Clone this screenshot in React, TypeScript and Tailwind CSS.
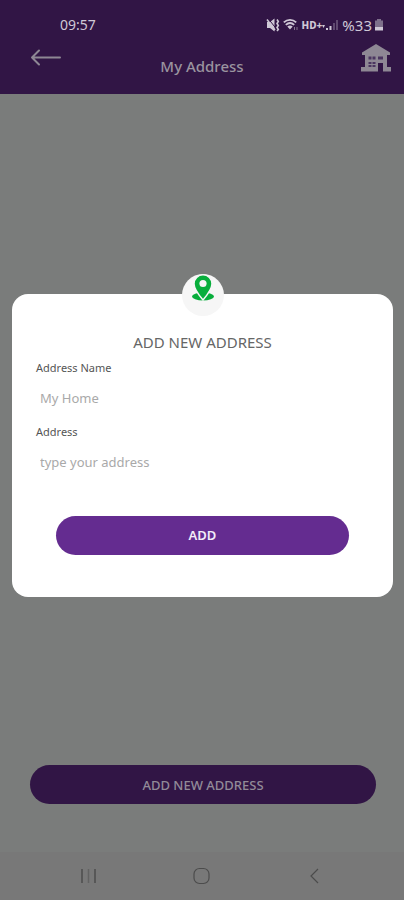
const StatusIcons = () => (
  <div className="flex items-center gap-[3px] text-[#cfc8d6]">
    {/* Muted, with vibration marks */}
    <svg className="h-4 w-3.5" viewBox="0 0 14 16" fill="currentColor" aria-hidden="true">
      <path d="M1 5h3l4.500-3.500v13L4 11H1z" />
      <path d="M2.500 2l8 10" stroke="#311545" strokeWidth="1" />
      <path d="M1 2.500l8 10.500" stroke="currentColor" strokeWidth="1.500" />
      <path d="M11 2.500l1.300 2-1.300 2 1.300 2-1.300 2 1.300 2-1.300 1.500" fill="none" stroke="currentColor" strokeWidth="1.600" />
    </svg>
    {/* Wifi */}
    <svg className="h-4 w-4" viewBox="0 0 16 16" fill="none" stroke="currentColor" aria-hidden="true">
      <path d="M.8 5.400c3.600-3.400 8.800-3.400 12.400 0" strokeWidth="1.800" />
      <path d="M2.800 7.800c2.600-2.300 5.800-2.300 8.400 0" strokeWidth="1.800" />
      <path d="M4.300 9.600c1.700-1.400 3.700-1.400 5.400 0L7 12.600z" fill="currentColor" stroke="none" />
      <path d="M11.500 10v3M14 10v3" stroke="#85758f" strokeWidth="1" />
    </svg>
    <span className="flex items-center text-[10px] leading-4 font-extrabold">
      HD+
      <svg className="h-2 w-1" viewBox="0 0 4 8" fill="currentColor" aria-hidden="true">
        <path d="M0 4h3L1.500 7z" />
      </svg>
    </span>
    {/* Signal */}
    <svg className="-ml-1 h-4 w-3.5" viewBox="0 0 14 16" fill="currentColor" aria-hidden="true">
      <path d="M1 11h2v2H1zM4.500 9h2v4h-2z" />
      <path d="M8 6h2v7H8zM11 3h2v10h-2z" fill="#604a70" />
    </svg>
    <span className="flex items-center gap-0.5 text-[15px] leading-5">
      %33
      <svg className="h-4 w-2.5" viewBox="0 0 10 16" fill="currentColor" aria-hidden="true">
        <path d="M3 2h4v1.500h2V10H1V3.500h2z" fill="#7e708b" />
        <path d="M1 10h8v3.500H1z" />
      </svg>
    </span>
  </div>
);

const HouseIcon = () => (
  <svg className="h-8 w-8" viewBox="0 0 32 32" aria-hidden="true">
    <path
      d="M16 2L2 10.500V13h3v12H1v4.500h17V21h5v8.500h8V25h-4V13h3v-2.500z"
      fill="#8e8794"
    />
    <path
      d="M8.500 14.500h3v3h-3zM12.500 14.500h3v3h-3zM18 14.500h5v3h-5zM8.500 20h3v2h-3zM12.500 20h3v2h-3zM8.500 23h3v2h-3zM12.500 23h3v2h-3z"
      fill="#4b3560"
    />
  </svg>
);

const PinIcon = () => (
  <svg className="h-7 w-6" viewBox="0 0 24 28" aria-hidden="true">
    <ellipse cx="12" cy="22.500" rx="11" ry="4" fill="#08ae3c" />
    <path
      d="M12 26S3 15.500 3 9.800a9 9 0 0 1 18 0C21 15.500 12 26 12 26z"
      fill="#08ae3c"
      stroke="#f6f6f6"
      strokeWidth="1.500"
    />
    <circle cx="12" cy="9.500" r="3.600" fill="#f6f6f6" />
  </svg>
);

const Header = () => (
  <header className="flex h-[94px] flex-col bg-[#311545]">
    <div className="flex items-center justify-between pt-[15px] pr-5 pl-15">
      <time className="text-sm leading-5 text-[#cfc8d6]">09:57</time>
      <StatusIcons />
    </div>
    <div className="grid grid-cols-[1fr_auto_1fr] items-start px-3">
      <button type="button" aria-label="Back" className="justify-self-start pt-3 pl-4.5 text-[#8e8794]">
        <svg className="h-5 w-8" viewBox="0 0 32 20" fill="none" stroke="currentColor" strokeWidth="2" strokeLinecap="round" strokeLinejoin="round" aria-hidden="true">
          <path d="M30 10.500H2M9 3.500l-7 7 7 7" />
        </svg>
      </button>
      <h1 className="pt-[21px] text-[15px] leading-5 font-medium text-[#9a939f]">My Address</h1>
      <button type="button" aria-label="Home" className="justify-self-end pt-[7px]">
        <HouseIcon />
      </button>
    </div>
  </header>
);

const NavBar = () => (
  <nav className="flex h-12 items-center justify-around bg-[#787878] px-8 text-[#4c4c4c]">
    <button type="button" aria-label="Recent apps">
      <svg className="h-5 w-5" viewBox="0 0 20 20" fill="none" stroke="currentColor" strokeWidth="1.500" aria-hidden="true">
        <path d="M3 3v14M16 3v14" />
        <path d="M9.500 3v14" stroke="#626262" />
      </svg>
    </button>
    <button type="button" aria-label="Home screen">
      <svg className="h-5 w-5" viewBox="0 0 20 20" fill="none" stroke="currentColor" strokeWidth="1.200" aria-hidden="true">
        <rect x="2" y="2.500" width="15" height="15" rx="5.500" />
      </svg>
    </button>
    <button type="button" aria-label="Go back">
      <svg className="h-5 w-5" viewBox="0 0 20 20" fill="none" stroke="currentColor" strokeWidth="1.200" aria-hidden="true">
        <path d="M13 3l-7 7 7 7" />
      </svg>
    </button>
  </nav>
);

type FieldProps = {
  id: string;
  label: string;
  placeholder: string;
};

const Field = ({ id, label, placeholder }: FieldProps) => (
  <div className="flex flex-col">
    <label htmlFor={id} className="text-[11px] leading-4 text-[#555]">
      {label}
    </label>
    <input
      id={id}
      type="text"
      placeholder={placeholder}
      className="h-11 w-full bg-transparent px-1 text-[13px] text-[#555] outline-none placeholder:text-[#a9a9a9]"
    />
  </div>
);

const AddressDialog = () => (
  <div className="fixed inset-0 flex items-center pr-[11px] pb-2.5 pl-3">
    <form
      role="dialog"
      aria-labelledby="dialog-title"
      className="relative w-full rounded-2xl bg-white px-6 pt-9 pb-[42px]"
      onSubmit={(e) => e.preventDefault()}
    >
      <div className="absolute -top-5 left-1/2 flex h-[42px] w-[42px] -translate-x-1/2 justify-center rounded-full bg-[#f6f6f6]">
        <PinIcon />
      </div>
      <h2 id="dialog-title" className="text-center text-[15px] leading-6 font-normal text-[#666]">
        ADD NEW ADDRESS
      </h2>
      <div className="flex flex-col gap-1 pt-1.5">
        <Field id="address-name" label="Address Name" placeholder="My Home" />
        <Field id="address" label="Address" placeholder="type your address" />
      </div>
      <div className="px-5 pt-8">
        <button type="submit" className="h-[39px] w-full rounded-full bg-[#642c90] pt-0.5 text-[13px] font-semibold text-[#f3ecf8]">
          ADD
        </button>
      </div>
    </form>
  </div>
);

export default function App() {
  return (
    <div className="flex min-h-screen w-full flex-col bg-[#7a7c7b] font-['Noto_Sans',sans-serif]">
      <Header />
      <main className="flex flex-1 flex-col justify-end pr-7 pb-12 pl-[30px]">
        <button type="button" className="h-[39px] w-full rounded-full bg-[#311545] pt-0.5 text-[13px] font-medium text-[#928a98]">
          ADD NEW ADDRESS
        </button>
      </main>
      <NavBar />
      <AddressDialog />
    </div>
  );
}
